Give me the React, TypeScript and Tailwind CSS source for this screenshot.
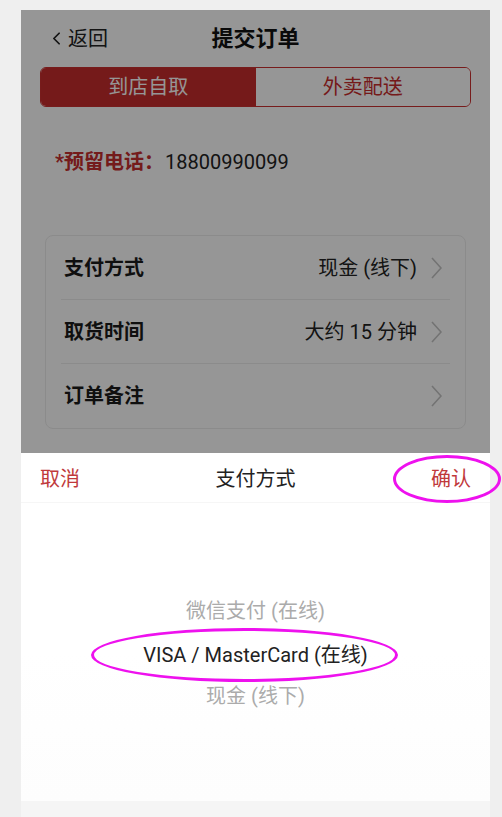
import { ChevronLeft } from 'lucide-react';

const font = { fontFamily: 'Roboto, "Noto Sans CJK SC", sans-serif' };

function Chevron() {
  return (
    <svg width="11" height="22" viewBox="0 0 11 22" className="ml-[14px] shrink-0">
      <polyline points="1,1 10,11 1,21" fill="none" stroke="#c4c4c4" strokeWidth="1.6" />
    </svg>
  );
}

function Row({ label, value }: { label: string; value?: string }) {
  return (
    <div className="mx-[15px] h-[64px] flex items-center pl-[3px] pr-[8px] border-b border-[#ececec] last:border-b-0">
      <span className="text-[20px] font-bold text-[#1a1a1a] flex-1">{label}</span>
      {value && <span className="text-[20px] text-[#222]">{value}</span>}
      <Chevron />
    </div>
  );
}

export default function App() {
  return (
    <div className="w-[502px] h-[817px] bg-[#efefef] pt-[10px] pl-[21px] pr-[12px] overflow-hidden" style={font}>
      <div className="relative h-[807px] flex flex-col">
        {/* page underneath, dimmed */}
        <div className="relative h-[443px] bg-white overflow-hidden">
          <div className="h-[57px] flex items-center relative">
            <div className="flex items-center pl-[25px] text-[20px] text-[#222]">
              <ChevronLeft size={21} strokeWidth={2} className="mr-[1px]" />
              <span>返回</span>
            </div>
            <div className="absolute left-0 right-0 text-center text-[22px] font-bold text-[#111] pointer-events-none">
              提交订单
            </div>
          </div>

          <div className="mx-[19px] h-[40px] flex rounded-[6px] border border-[#cb3030] overflow-hidden">
            <div className="flex-1 bg-[#c82d2d] text-white text-[20px] flex items-center justify-center">到店自取</div>
            <div className="flex-1 bg-white text-[#c82d2d] text-[20px] flex items-center justify-center">外卖配送</div>
          </div>

          <div className="mt-[41px] h-[28px] flex items-center pl-[34px] text-[20px]">
            <span className="font-bold text-[#c62f2f]">*预留电话：</span>
            <span className="text-[#222] ml-[1px]">18800990099</span>
          </div>

          <div className="mt-[59px] mx-[24px] rounded-[8px] bg-white border border-[#ececec]">
            <Row label="支付方式" value="现金 (线下)" />
            <Row label="取货时间" value="大约 15 分钟" />
            <Row label="订单备注" />
          </div>

          <div className="absolute inset-0 bg-black/[0.41]" />
        </div>

        {/* bottom sheet */}
        <div className="h-[348px] bg-white flex flex-col">
          <div className="h-[50px] flex items-center justify-between px-[19px] pt-[2px] text-[20px] border-b border-[#f6f6f6]">
            <span className="text-[#c0393b]">取消</span>
            <span className="text-[#222]">支付方式</span>
            <span className="text-[#c0393b]">确认</span>
          </div>
          <div className="flex-1 flex flex-col items-center pt-[86px] bg-gradient-to-b from-white via-white to-[#fdfdfd] text-[20px]">
            <div className="h-[44px] flex items-center text-[#ababab]">微信支付 (在线)</div>
            <div className="h-[43px] flex items-center text-[#222]">VISA / MasterCard (在线)</div>
            <div className="h-[40px] flex items-center text-[#ababab]">现金 (线下)</div>
          </div>
        </div>
        <div className="flex-1 bg-[#f5f5f5]" />

        {/* annotation ellipses */}
        <div className="absolute left-[372px] top-[445px] w-[108px] h-[48px] rounded-[50%] border-[3px] border-[#ee11ee]" />
        <div className="absolute left-[70px] top-[618px] w-[307px] h-[54px] rounded-[50%] border-[3px] border-[#ee11ee]" />
      </div>
    </div>
  );
}
